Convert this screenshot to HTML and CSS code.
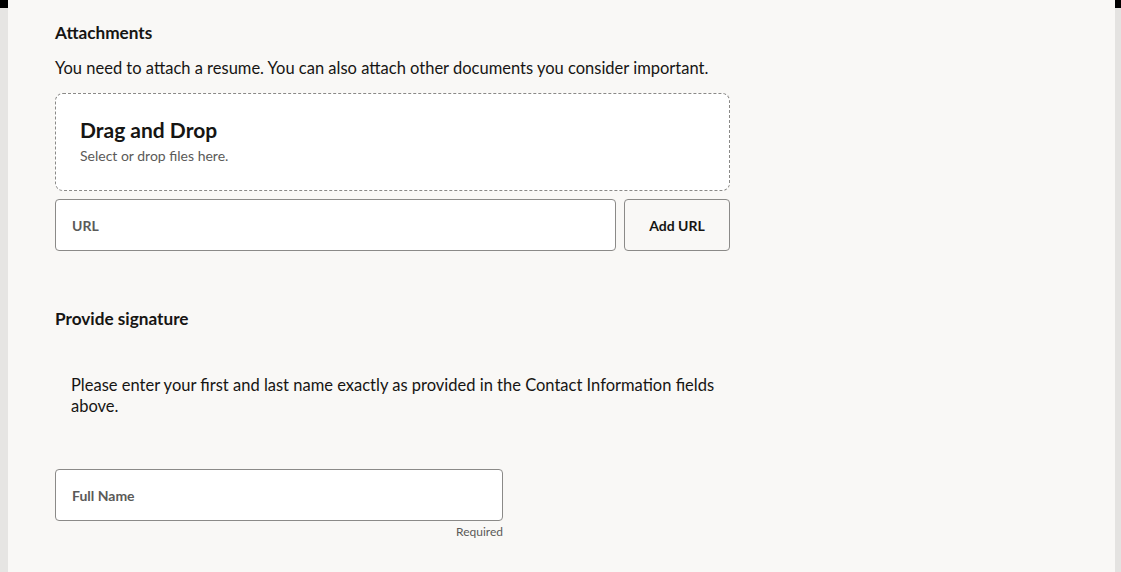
FILE: index.html
```html
<!DOCTYPE html>
<html lang="en">
<head>
<meta charset="utf-8">
<link rel="stylesheet" href="styles.css">
</head>
<body>
<div class="frame">
  <div class="edge edge-left"></div>
  <main class="panel">
    <section class="section">
      <h2 class="heading">Attachments</h2>
      <p class="desc">You need to attach a resume. You can also attach other documents you consider important.</p>
      <div class="dropzone">
        <div class="dz-title">Drag and Drop</div>
        <div class="dz-sub">Select or drop files here.</div>
      </div>
      <div class="url-row">
        <div class="field url-field"><span class="label">URL</span></div>
        <button class="btn">Add URL</button>
      </div>
    </section>
    <section class="section sig">
      <h2 class="heading">Provide signature</h2>
      <p class="sig-text">Please enter your first and last name exactly as provided in the Contact Information fields above.</p>
      <div class="name-wrap">
        <div class="field name-field"><span class="label">Full Name</span></div>
        <div class="help">Required</div>
      </div>
    </section>
  </main>
  <div class="edge edge-right"></div>
</div>
</body>
</html>
```

FILE: styles.css
```css
* { box-sizing: border-box; }
html, body { margin: 0; padding: 0; }
body {
  width: 1121px;
  height: 572px;
  overflow: hidden;
  font-family: Lato, "Noto Sans", sans-serif;
  color: #161513;
  background: #f9f8f6;
}
.frame {
  display: flex;
  height: 572px;
}
.edge { flex: 0 0 auto; }
.edge-left { width: 8px; background: linear-gradient(to bottom, #000 0, #000 8px, #e6e5e3 8px); }
.edge-right { width: 6px; background: linear-gradient(to bottom, #000 0, #000 8px, #e4e3e1 8px); }
.panel {
  flex: 1;
  background: #f9f8f6;
  padding: 23px 0 0 47px;
}
.section { width: 675px; }
.heading {
  margin: 0;
  font-size: 17.2px;
  font-weight: 700;
  line-height: 20px;
}
.desc {
  margin: 14px 0 0;
  font-size: 16.5px;
  line-height: 22px;
  white-space: nowrap;
}
.dropzone {
  margin-top: 14px;
  height: 98px;
  background: #fff;
  border: 1px dashed #8a8987;
  border-radius: 8px;
  padding: 22px 24px 0;
}
.dz-title {
  font-size: 21px;
  font-weight: 700;
  line-height: 28px;
}
.dz-sub {
  margin-top: 3px;
  font-size: 14px;
  line-height: 18px;
  color: #5b5a58;
}
.url-row {
  display: flex;
  gap: 8px;
  margin-top: 8px;
}
.field {
  height: 52px;
  background: #fff;
  border: 1px solid #8b8a88;
  border-radius: 4px;
  display: flex;
  align-items: center;
  padding: 0 16px;
}
.url-field { flex: 1; }
.label {
  font-size: 14px;
  font-weight: 700;
  color: #5b5a58;
}
.btn {
  width: 106px;
  height: 52px;
  background: #f9f8f6;
  border: 1px solid #8b8a88;
  border-radius: 4px;
  font-family: inherit;
  font-size: 14px;
  font-weight: 700;
  color: #161513;
  padding: 0;
}
.sig { margin-top: 58px; }
.sig-text {
  margin: 46px 0 0 16px;
  width: 660px;
  font-size: 16.5px;
  line-height: 21px;
}
.name-wrap {
  width: 448px;
  margin-top: 52px;
}
.name-field { width: 448px; }
.help {
  text-align: right;
  font-size: 12px;
  line-height: 16px;
  color: #5b5a58;
  margin-top: 3px;
}
```
